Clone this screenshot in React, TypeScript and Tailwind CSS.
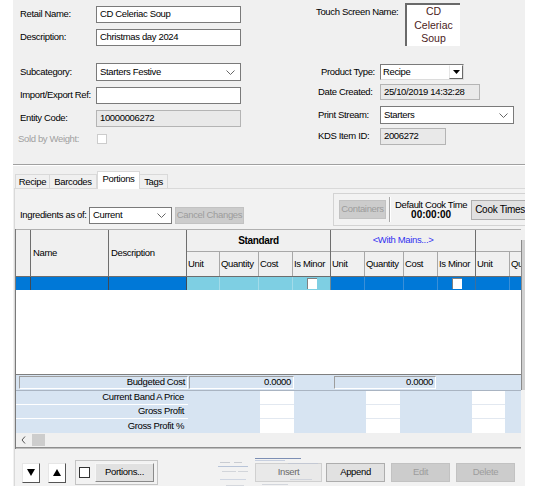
import React from 'react';

function Chevron() {
  return (
    <svg width="9" height="5" viewBox="0 0 9 5" className="shrink-0">
      <path d="M0.5 0.5 L4.5 4.5 L8.5 0.5" fill="none" stroke="#666" strokeWidth="1" />
    </svg>
  );
}

function Field({ className = '', disabled = false, children }: { className?: string; disabled?: boolean; children?: React.ReactNode }) {
  return (
    <div
      className={`flex items-center border px-[3px] whitespace-nowrap ${
        disabled ? 'bg-[#e9e9e9] border-[#b4b4b4]' : 'bg-white border-[#7a7a7a]'
      } ${className}`}
    >
      {children}
    </div>
  );
}

function Combo({ className = '', children }: { className?: string; children?: React.ReactNode }) {
  return (
    <div className={`flex items-center justify-between bg-white border border-[#7a7a7a] pl-[3px] pr-[5px] ${className}`}>
      <span>{children}</span>
      <Chevron />
    </div>
  );
}

function Btn({ className = '', off = false, children }: { className?: string; off?: boolean; children?: React.ReactNode }) {
  return (
    <div
      className={`flex items-center justify-center border whitespace-nowrap ${
        off ? 'bg-[#cccccc] border-[#c2c2c2] text-[#9c9c9c]' : 'bg-[#e1e1e1] border-[#adadad]'
      } ${className}`}
    >
      {children}
    </div>
  );
}

function Row({ label, children, className = '' }: { label: string; children: React.ReactNode; className?: string }) {
  return (
    <div className={`flex items-center ${className}`}>
      <span className="w-[76px] whitespace-nowrap">{label}</span>
      {children}
    </div>
  );
}

function RRow({ label, children, className = '' }: { label: string; children: React.ReactNode; className?: string }) {
  return (
    <div className={`flex items-center ${className}`}>
      <span className="w-[62px] whitespace-nowrap">{label}</span>
      {children}
    </div>
  );
}

function Check({ className = '' }: { className?: string }) {
  return <div className={`w-[10px] h-[11px] mt-[1px] bg-white border-t border-l border-[#808080] ${className}`} />;
}

function HeadGroup({ title, blue = false, cols }: { title: string; blue?: boolean; cols: { w: string; label: string }[] }) {
  return (
    <div className="flex flex-col border-r border-[#6e6e6e] shrink-0">
      <div className={`h-[22px] border-b border-[#a8a8a8] flex items-center justify-center ${blue ? 'text-[#3232f0]' : 'font-bold text-[10px]'}`}>
        {title}
      </div>
      <div className="flex flex-1">
        {cols.map((c, i) => (
          <div
            key={i}
            className={`${c.w} flex items-center pl-[1px] overflow-hidden whitespace-nowrap ${i < cols.length - 1 ? 'border-r border-[#a8a8a8]' : ''}`}
          >
            {c.label}
          </div>
        ))}
      </div>
    </div>
  );
}

const std = [
  { w: 'w-[33px]', label: 'Unit' },
  { w: 'w-[39px]', label: 'Quantity' },
  { w: 'w-[34px]', label: 'Cost' },
  { w: 'w-[37px]', label: 'Is Minor' },
];
const mains = [
  { w: 'w-[34px]', label: 'Unit' },
  { w: 'w-[39px]', label: 'Quantity' },
  { w: 'w-[34px]', label: 'Cost' },
  { w: 'w-[37px]', label: 'Is Minor' },
];
const third = [
  { w: 'w-[34px]', label: 'Unit' },
  { w: 'w-[30px]', label: 'Quantity' },
];

const blocks: [string, boolean][] = [
  ['w-[72px]', false],
  ['w-[34px]', true],
  ['w-[72px]', false],
  ['w-[34px]', true],
  ['w-[72px]', false],
  ['w-[33px]', true],
  ['flex-1', false],
];

function Thumb() {
  return (
    <svg width="104" height="34" viewBox="0 0 104 34" className="absolute left-[-37px] top-[-6px] pointer-events-none">
      <rect x="0" y="9" width="30" height="1" fill="#b8c4d8" />
      <rect x="2" y="5" width="10" height="1" fill="#c9ccd2" />
      <rect x="16" y="5" width="8" height="1" fill="#c9ccd2" />
      <rect x="4" y="14" width="14" height="1" fill="#d2d5da" />
      <rect x="20" y="14" width="10" height="1" fill="#d2d5da" />
      <rect x="2" y="22" width="26" height="1" fill="#cfd6e2" />
      <rect x="8" y="28" width="18" height="1" fill="#d5d8dd" />
      <rect x="37" y="1" width="46" height="1" fill="#7d8fb4" />
      <rect x="37" y="3" width="30" height="1" fill="#c7cfdf" />
      <rect x="70" y="6" width="30" height="1" fill="#c3c8d3" />
      <rect x="72" y="22" width="22" height="1" fill="#d0d4dc" />
      <rect x="44" y="27" width="26" height="1" fill="#d3d6dc" />
    </svg>
  );
}

export default function App() {
  return (
    <div className="w-[544px] h-[496px] bg-white font-['Liberation_Sans',Arial,sans-serif] text-[9.5px] tracking-[-0.35px] text-black">
      <div className="ml-[13px] w-[512px] h-[486px] bg-[#f0f0f0] overflow-hidden flex flex-col">
        {/* top fields */}
        <div className="flex h-[164px] shrink-0">
          <div className="w-[303px] pl-[7px] pt-[6px] flex flex-col">
            <Row label="Retail Name:" className="h-[17px]">
              <Field className="w-[145px] h-[17px]">CD Celeriac Soup</Field>
            </Row>
            <Row label="Description:" className="h-[17px] mt-[6px]">
              <Field className="w-[145px] h-[17px]">Christmas day 2024</Field>
            </Row>
            <Row label="Subcategory:" className="h-[18px] mt-[17px]">
              <Combo className="w-[145px] h-[18px]">Starters Festive</Combo>
            </Row>
            <Row label="Import/Export Ref:" className="h-[17px] mt-[6px]">
              <Field className="w-[145px] h-[17px]" />
            </Row>
            <Row label="Entity Code:" className="h-[17px] mt-[6px]">
              <Field disabled className="w-[145px] h-[17px]">10000006272</Field>
            </Row>
            <div className="flex items-center h-[12px] mt-[6px] -ml-[2px]">
              <span className="w-[79px] text-[#a0a0a0] whitespace-nowrap">Sold by Weight:</span>
              <div className="w-[10px] h-[10px] bg-white border border-[#cccccc]" />
            </div>
          </div>

          <div className="flex-1 pl-[2px] pt-[3px] flex flex-col">
            <div className="flex h-[43px]">
              <span className="w-[87px] pt-[2px] -ml-[2px] pl-[0px] whitespace-nowrap">Touch Screen Name:</span>
              <div className="ml-[2px] w-[55px] h-[43px] bg-white border-l-2 border-t-2 border-[#6a6a6a] flex flex-col items-center justify-center text-[10.5px] leading-[13.5px] tracking-normal text-[#4b1c1c]">
                <span>CD</span>
                <span>Celeriac</span>
                <span>Soup</span>
              </div>
            </div>
            <div className="flex items-center h-[16px] mt-[18px]">
              <span className="w-[62px] pl-[3px] whitespace-nowrap">Product Type:</span>
              <div className="flex w-[84px] h-[16px] bg-white border border-t-[#7a7a7a] border-l-[#7a7a7a] border-r-[#dcdcdc] border-b-[#dcdcdc]">
                <span className="flex-1 pl-[2px] flex items-center">Recipe</span>
                <div className="w-[14px] h-full bg-white border border-t-white border-l-[#e6e6e6] border-r-[#696969] border-b-[#696969] flex items-center justify-center">
                  <svg width="7" height="4" viewBox="0 0 7 4">
                    <path d="M0 0 H7 L3.5 4 Z" fill="#000" />
                  </svg>
                </div>
              </div>
            </div>
            <RRow label="Date Created:" className="h-[16px] mt-[4px]">
              <Field disabled className="w-[100px] h-[16px]">25/10/2019 14:32:28</Field>
            </RRow>
            <RRow label="Print Stream:" className="h-[18px] mt-[6px]">
              <Combo className="w-[134px] h-[18px]">Starters</Combo>
            </RRow>
            <RRow label="KDS Item ID:" className="h-[17px] mt-[4px]">
              <Field disabled className="w-[66px] h-[17px]">2006272</Field>
            </RRow>
          </div>
        </div>

        <div className="h-[2px] shrink-0 border-t border-b border-t-[#a0a0a0] border-b-white" />

        {/* tabs */}
        <div className="flex items-end h-[18px] mt-[5px] pl-[2px] relative z-10 shrink-0">
          <div className="w-[35px] h-[15px] border border-b-0 border-[#d9d9d9] flex items-center justify-center">Recipe</div>
          <div className="w-[47px] h-[15px] border border-b-0 border-l-0 border-[#d9d9d9] flex items-center justify-center">Barcodes</div>
          <div className="w-[43px] h-[18px] bg-white border border-b-0 border-[#d9d9d9] flex items-center justify-center pb-[2px]">Portions</div>
          <div className="w-[28px] h-[15px] border border-b-0 border-l-0 border-[#d9d9d9] flex items-center justify-center">Tags</div>
        </div>

        {/* tab page */}
        <div className="ml-[1px] -mt-px flex-1 border-t border-l border-[#d9d9d9] bg-[#f2f2f2] flex flex-col">
          <div className="flex h-[33px] mt-[4px] shrink-0">
            <div className="flex items-center self-end mb-[2px] pl-[5px]">
              <span className="w-[69px] whitespace-nowrap">Ingredients as of:</span>
              <Combo className="w-[83px] h-[17px]">Current</Combo>
              <Btn off className="w-[69px] h-[17px] ml-[3px]">Cancel Changes</Btn>
            </div>
            <div className="ml-[89px] w-[200px] shrink-0 border border-[#d3d3d3] flex items-center pl-[5px]">
              <Btn off className="w-[52px] h-[19px]">Containers</Btn>
              <div className="ml-[3px] w-[2px] h-[25px] border-l border-r border-l-[#a8a8a8] border-r-white" />
              <div className="ml-[4px] flex flex-col items-center leading-[10px] mt-[1px]">
                <span className="whitespace-nowrap">Default Cook Time</span>
                <span className="font-bold text-[10px] tracking-normal">00:00:00</span>
              </div>
              <Btn className="ml-[4px] h-[20px] pl-[3px] pr-[6px] text-[10px] tracking-[-0.3px]">Cook Times</Btn>
            </div>
          </div>

          {/* grid */}
          <div className="flex mt-[3px] shrink-0">
            <div className="w-[506px] shrink-0 border-l border-[#7a7a7a] flex flex-col overflow-hidden">
              <div className="flex h-[48px] border-t border-t-[#b0b0b0] border-b border-b-[#6e6e6e] bg-[#f0f0f0]">
                <div className="w-[15px] shrink-0 border-r border-[#6e6e6e]" />
                <div className="w-[78px] shrink-0 border-r border-[#6e6e6e] flex items-center pl-[2px]">Name</div>
                <div className="w-[78px] shrink-0 border-r border-[#6e6e6e] flex items-center pl-[2px]">Description</div>
                <HeadGroup title="Standard" cols={std} />
                <HeadGroup title="<With Mains...>" blue cols={mains} />
                <HeadGroup title="" cols={third} />
              </div>

              <div className="flex h-[13px]">
                <div className="w-[15px] shrink-0 bg-[#0078d7] border-r border-[#404a55]" />
                <div className="w-[78px] shrink-0 bg-[#0078d7] border-r border-[#404a55]" />
                <div className="w-[78px] shrink-0 bg-[#0078d7] border-r border-[#404a55]" />
                <div className="flex shrink-0 bg-[#7ecfe3] border-r border-[#6e8a96]">
                  <div className="w-[33px] border-r border-[#a3dbe9]" />
                  <div className="w-[39px] border-r border-[#a3dbe9]" />
                  <div className="w-[34px] border-r border-[#a3dbe9]" />
                  <div className="w-[37px] flex justify-center">
                    <Check />
                  </div>
                </div>
                <div className="flex shrink-0 bg-[#0078d7] border-r border-[#3d6f9c]">
                  <div className="w-[34px] border-r border-[#3a8fd8]" />
                  <div className="w-[39px] border-r border-[#3a8fd8]" />
                  <div className="w-[34px] border-r border-[#3a8fd8]" />
                  <div className="w-[37px] flex justify-center">
                    <Check />
                  </div>
                </div>
                <div className="flex flex-1 bg-[#0078d7]">
                  <div className="w-[34px] border-r border-[#3a8fd8]" />
                  <div className="flex-1" />
                </div>
              </div>

              <div className="h-[84px] bg-white" />

              {/* footer */}
              <div className="border-t border-[#7f7f7f] bg-[#d7e4f2]">
                <div className="flex items-center h-[16px] border-b border-[#a9b4c2] pl-[3px]">
                  <div className="w-[169px] h-[13px] border border-t-[#9d9d9d] border-l-[#9d9d9d] border-r-white border-b-white flex items-center justify-end pr-[2px]">
                    Budgeted Cost
                  </div>
                  <div className="ml-[1px] w-[105px] h-[13px] border border-t-[#9d9d9d] border-l-[#9d9d9d] border-r-white border-b-white flex items-center justify-end pr-[2px]">
                    0.0000
                  </div>
                  <div className="ml-[40px] w-[102px] h-[13px] border border-t-[#9d9d9d] border-l-[#9d9d9d] border-r-white border-b-white flex items-center justify-end pr-[2px]">
                    0.0000
                  </div>
                </div>
                {['Current Band A Price', 'Gross Profit', 'Gross Profit %'].map((l, r) => (
                  <div key={l} className="flex h-[14px]">
                    <div className={`w-[172px] shrink-0 flex items-center justify-end pr-[4px] ${r < 2 ? 'border-b border-white' : ''}`}>{l}</div>
                    {blocks.map(([w, white], i) => (
                      <div
                        key={i}
                        className={`${w} shrink-0 ${white ? 'bg-white' : ''} ${white && r < 2 ? 'border-b border-[#e2e8f0]' : ''}`}
                      />
                    ))}
                  </div>
                ))}
              </div>

              <div className="flex items-center h-[14px] bg-[#f0f0f0]">
                <div className="w-[15px] flex justify-center">
                  <svg width="5" height="8" viewBox="0 0 5 8">
                    <path d="M4 0.5 L1 4 L4 7.5" fill="none" stroke="#555" strokeWidth="1" />
                  </svg>
                </div>
                <div className="ml-[1px] w-[13px] h-[12px] bg-[#cdcdcd]" />
              </div>
              <div className="h-[2px] border-t border-b border-t-[#8e8e8e] border-b-[#bdbdbd]" />
            </div>
            <div className="w-[5px] flex flex-col">
              <div className="h-[11px] bg-[#f0f0f0]" />
              <div className="h-[150px] bg-[#d0d0d0] border-l border-[#8a8a8a]" />
            </div>
          </div>

          {/* bottom buttons */}
          <div className="flex items-center h-[25px] mt-[11px] pl-[7px] shrink-0">
            <div className="w-[18px] h-[20px] bg-white border border-t-[#e6e6e6] border-l-[#e6e6e6] border-r-[#555] border-b-[#555] flex items-center justify-center">
              <svg width="8" height="7" viewBox="0 0 8 7">
                <path d="M0 0 H8 L4 7 Z" fill="#000" />
              </svg>
            </div>
            <div className="ml-[8px] w-[18px] h-[20px] bg-white border border-t-[#e6e6e6] border-l-[#e6e6e6] border-r-[#555] border-b-[#555] flex items-center justify-center">
              <svg width="8" height="7" viewBox="0 0 8 7">
                <path d="M0 7 H8 L4 0 Z" fill="#000" />
              </svg>
            </div>
            <div className="ml-[9px] w-[83px] h-[25px] border border-[#c4c4c4] flex items-center pl-[3px]">
              <div className="w-[11px] h-[11px] bg-white border border-[#333]" />
              <Btn className="ml-[5px] w-[59px] h-[19px] border-t-[#f6f6f6] border-l-[#f6f6f6] border-r-[#8a8a8a] border-b-[#8a8a8a]">Portions...</Btn>
            </div>
            <div className="relative ml-[97px]">
              <Thumb />
              <Btn className="w-[67px] h-[19px] bg-[#e6e6e6]/70 border-[#d0d0d0] text-[#6a6a6a]">Insert</Btn>
            </div>
            <Btn className="ml-[4px] w-[59px] h-[19px]">Append</Btn>
            <Btn off className="ml-[6px] w-[59px] h-[19px]">Edit</Btn>
            <Btn off className="ml-[6px] w-[59px] h-[19px]">Delete</Btn>
          </div>
        </div>
      </div>
    </div>
  );
}
